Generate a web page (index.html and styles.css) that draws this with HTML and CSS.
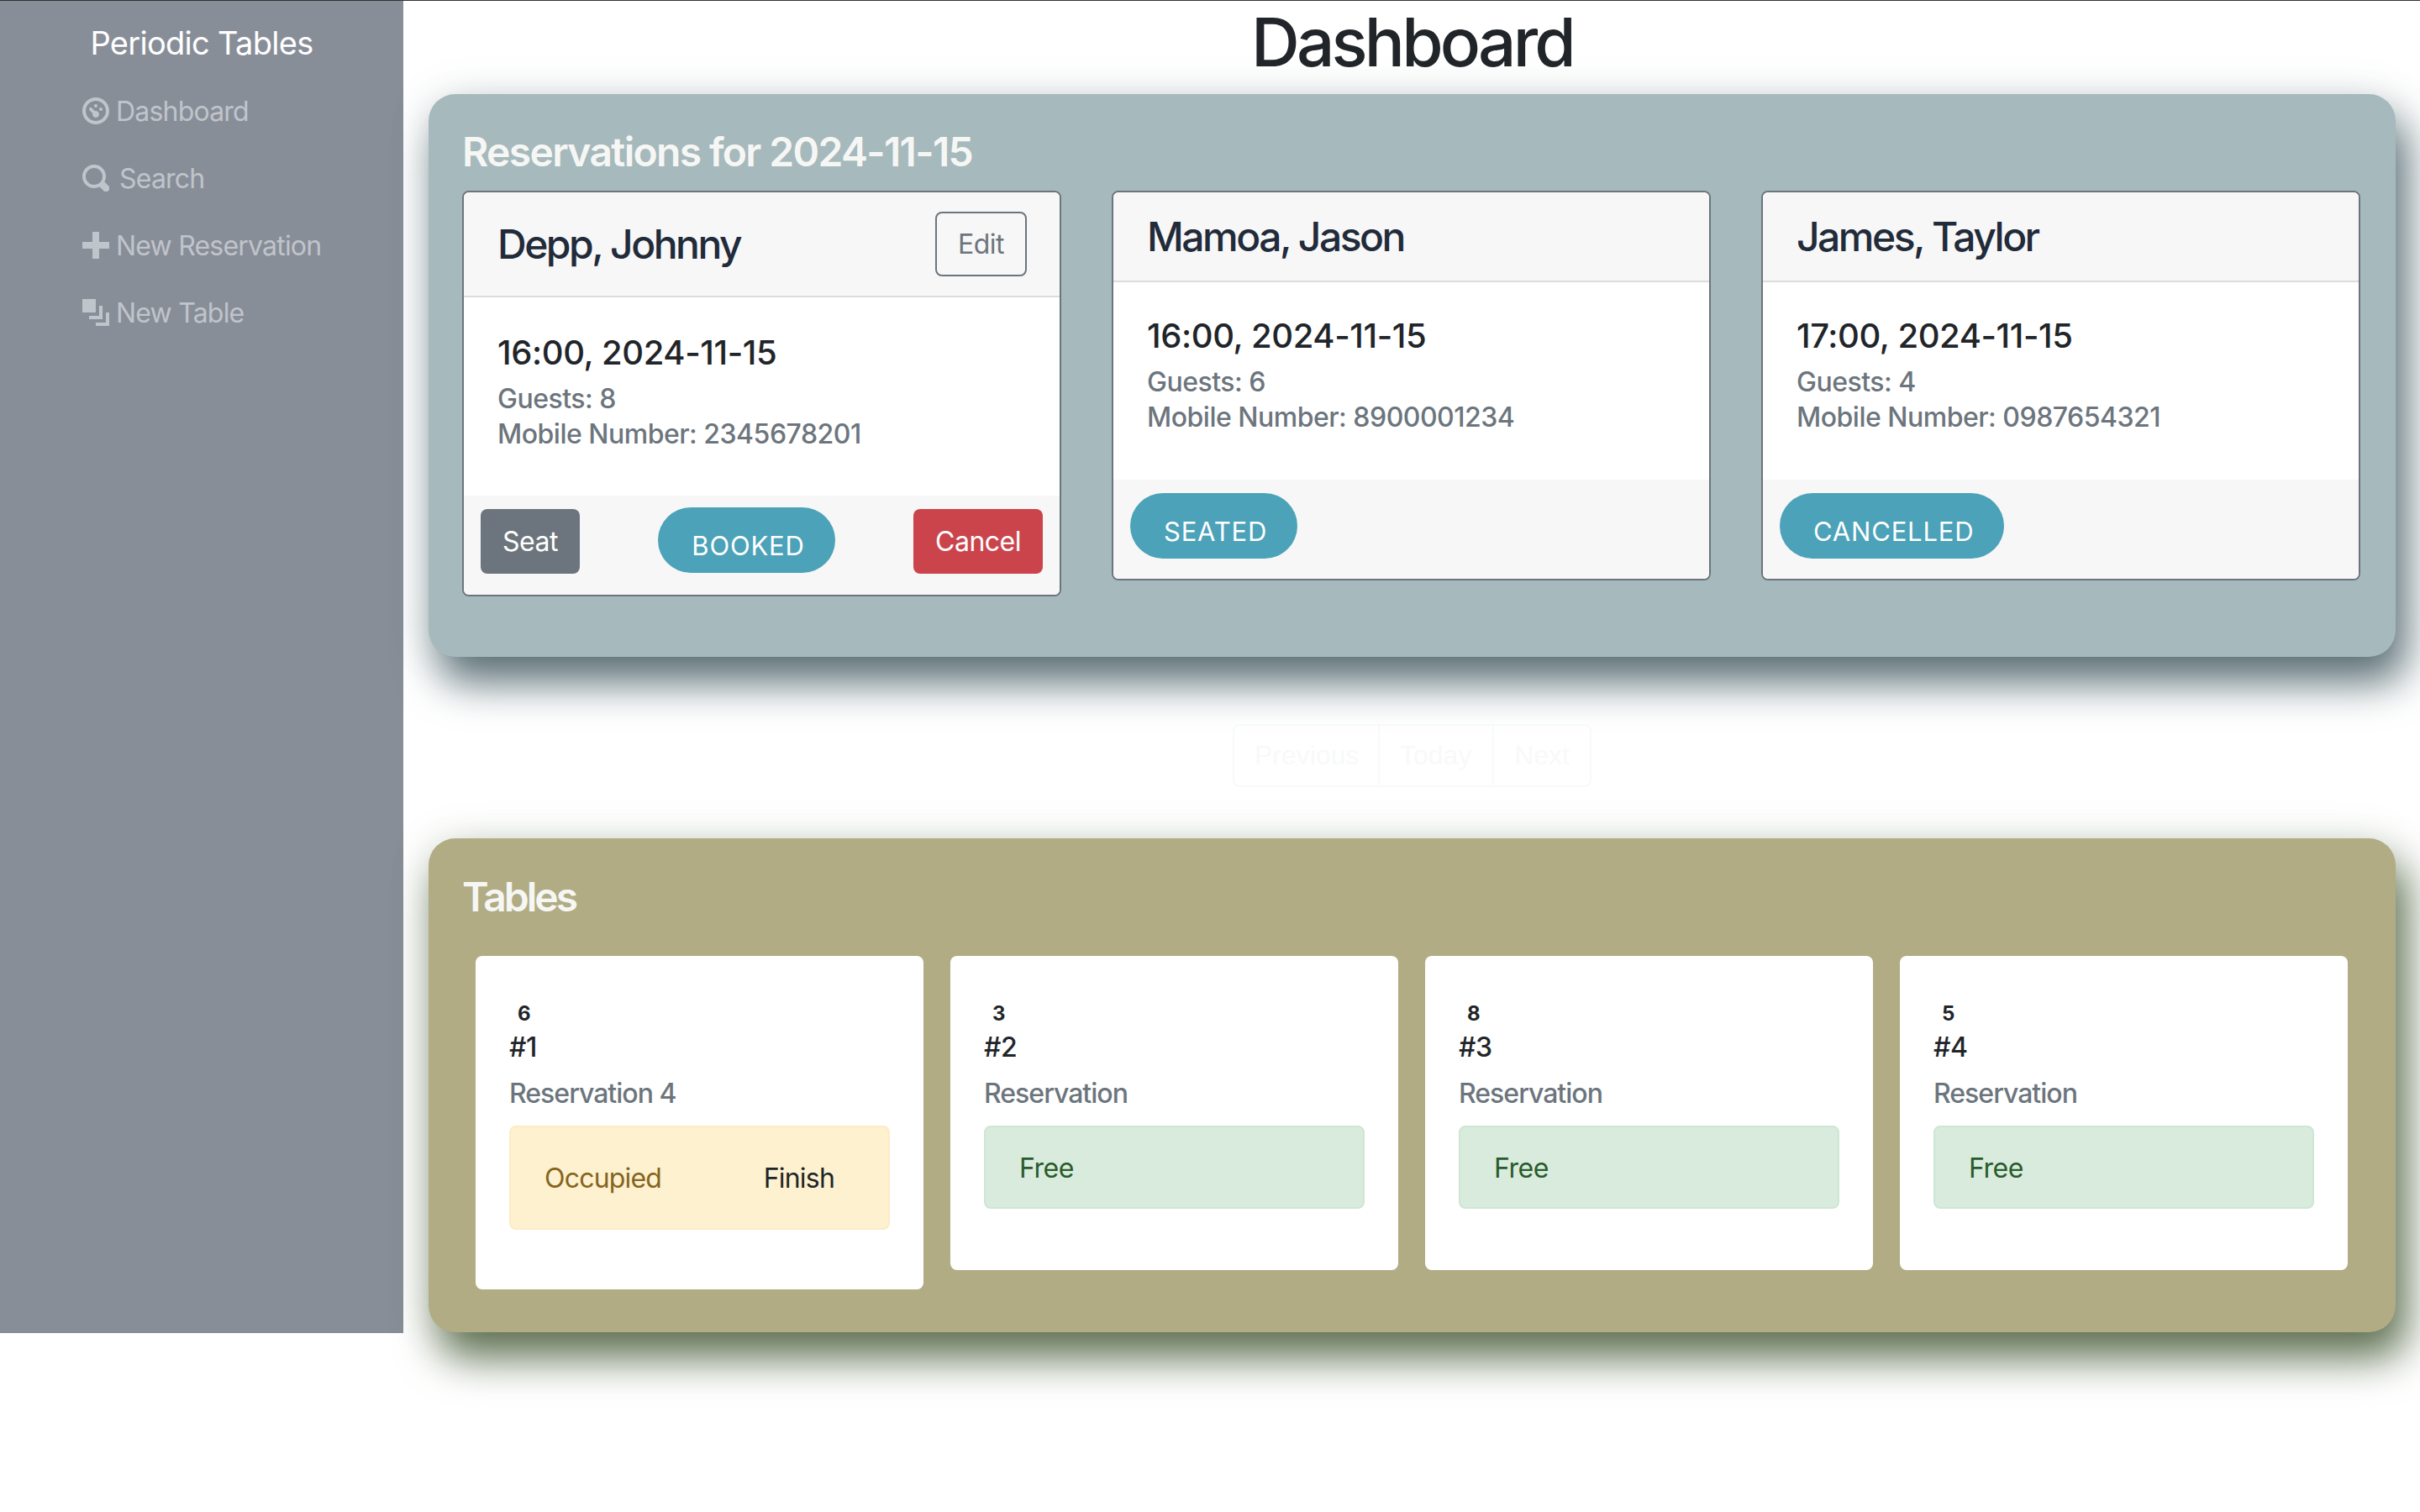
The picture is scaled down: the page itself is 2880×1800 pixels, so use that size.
FILE: index.html
```html
<!DOCTYPE html>
<html lang="en">
<head>
<meta charset="utf-8">
<title>Periodic Tables</title>
<link rel="stylesheet" href="styles.css">
</head>
<body>
<div class="app">
  <aside class="sidebar">
    <div class="brand">Periodic Tables</div>
    <nav class="nav">
      <a class="nav-item"><svg class="icon" viewBox="0 0 8 8"><path d="M4 0c-2.2 0-4 1.8-4 4s1.8 4 4 4 4-1.8 4-4-1.8-4-4-4zm0 1c1.66 0 3 1.34 3 3s-1.34 3-3 3-3-1.34-3-3 1.34-3 3-3zm0 1c-.28 0-.5.22-.5.5s.22.5.5.5.5-.22.5-.5-.22-.5-.5-.5zm-1.66 1a.5.5 0 0 0-.19.84l.91.91c-.02.08-.06.16-.06.25 0 .55.45 1 1 1s1-.45 1-1-.45-1-1-1c-.09 0-.17.04-.25.06l-.91-.91a.5.5 0 0 0-.44-.16.5.5 0 0 0-.06 0zm3.16 0c-.28 0-.5.22-.5.5s.22.5.5.5.5-.22.5-.5-.22-.5-.5-.5z"/></svg><span class="nav-label">Dashboard</span></a>
      <a class="nav-item nav-item-wide"><svg class="icon" viewBox="0 0 8 8"><path d="M3.5 0c-1.93 0-3.5 1.57-3.5 3.5s1.57 3.5 3.5 3.5c.59 0 1.17-.14 1.66-.41a1 1 0 0 0 .13.13l1 1a1.02 1.02 0 1 0 1.44-1.44l-1-1a1 1 0 0 0-.16-.13c.27-.49.44-1.06.44-1.66 0-1.93-1.57-3.5-3.5-3.5zm0 1c1.39 0 2.5 1.11 2.5 2.5 0 .66-.24 1.27-.66 1.72-.01.01-.02.02-.03.03a1 1 0 0 0-.13.13c-.44.4-1.04.63-1.69.63-1.39 0-2.5-1.11-2.5-2.5s1.11-2.5 2.5-2.5z"/></svg><span class="nav-label">Search</span></a>
      <a class="nav-item"><svg class="icon" viewBox="0 0 8 8"><path d="M3 0v3h-3v2h3v3h2v-3h3v-2h-3v-3h-2z"/></svg><span class="nav-label">New Reservation</span></a>
      <a class="nav-item"><svg class="icon" viewBox="0 0 8 8"><path d="M0 0v4h4v-4h-4zm5 2v3h-3v1h4v-4h-1zm2 2v3h-3v1h4v-4h-1z"/></svg><span class="nav-label">New Table</span></a>
    </nav>
  </aside>
  <main class="main">
    <h1 class="page-title">Dashboard</h1>

    <section class="panel panel-res">
      <h2 class="panel-title">Reservations for 2024-11-15</h2>
      <div class="res-grid">
        <article class="res-card">
          <header class="res-head res-head-edit">
            <h3 class="res-name">Depp, Johnny</h3>
            <a class="btn btn-edit">Edit</a>
          </header>
          <div class="res-body res-body-tall">
            <h4 class="res-time">16:00, 2024-11-15</h4>
            <p class="res-line">Guests: 8</p>
            <p class="res-line">Mobile Number: 2345678201</p>
          </div>
          <footer class="res-foot res-foot-actions">
            <a class="btn btn-seat">Seat</a>
            <span class="pill">BOOKED</span>
            <a class="btn btn-cancel">Cancel</a>
          </footer>
        </article>
        <article class="res-card">
          <header class="res-head">
            <h3 class="res-name">Mamoa, Jason</h3>
          </header>
          <div class="res-body">
            <h4 class="res-time">16:00, 2024-11-15</h4>
            <p class="res-line">Guests: 6</p>
            <p class="res-line">Mobile Number: 8900001234</p>
          </div>
          <footer class="res-foot">
            <span class="pill">SEATED</span>
          </footer>
        </article>
        <article class="res-card">
          <header class="res-head">
            <h3 class="res-name">James, Taylor</h3>
          </header>
          <div class="res-body">
            <h4 class="res-time">17:00, 2024-11-15</h4>
            <p class="res-line">Guests: 4</p>
            <p class="res-line">Mobile Number: 0987654321</p>
          </div>
          <footer class="res-foot">
            <span class="pill">CANCELLED</span>
          </footer>
        </article>
      </div>
    </section>

    <div class="pager">
      <a class="pager-btn">Previous</a>
      <a class="pager-btn">Today</a>
      <a class="pager-btn">Next</a>
    </div>

    <section class="panel panel-tables">
      <h2 class="panel-title panel-title-tables">Tables</h2>
      <div class="table-grid">
        <article class="table-card">
          <span class="badge">6</span>
          <h4 class="table-num">#1</h4>
          <p class="table-res">Reservation 4</p>
          <div class="alert alert-busy"><span>Occupied</span><a class="finish">Finish</a></div>
        </article>
        <article class="table-card">
          <span class="badge">3</span>
          <h4 class="table-num">#2</h4>
          <p class="table-res">Reservation</p>
          <div class="alert alert-free">Free</div>
        </article>
        <article class="table-card">
          <span class="badge">8</span>
          <h4 class="table-num">#3</h4>
          <p class="table-res">Reservation</p>
          <div class="alert alert-free">Free</div>
        </article>
        <article class="table-card">
          <span class="badge">5</span>
          <h4 class="table-num">#4</h4>
          <p class="table-res">Reservation</p>
          <div class="alert alert-free">Free</div>
        </article>
      </div>
    </section>
  </main>
</div>
</body>
</html>
```

FILE: styles.css
```css
* { box-sizing: border-box; }
html, body { margin: 0; padding: 0; background: #fff; }
body {
  font-family: Inter, "Liberation Sans", sans-serif;
  font-size: 32px;
  line-height: 48px;
  color: #212529;
  letter-spacing: -0.5px;
  border-top: 1px solid #333;
  height: 1799px;
  overflow: hidden;
}
h1, h2, h3, h4, p { margin: 0; font-weight: 500; }
.app { display: flex; align-items: flex-start; }

.sidebar { width: 480px; flex: none; height: 1586px; background: #888e98; padding-top: 27px; }
.brand { color: #fff; font-size: 38px; line-height: 46px; text-align: center; letter-spacing: -0.7px; font-weight: 400; margin-bottom: 18px; }
.nav { display: flex; flex-direction: column; padding-left: 98px; }
.nav-item { display: flex; align-items: center; gap: 8px; height: 80px; color: #c0c4cb; font-size: 32px; letter-spacing: -0.8px; }
.nav-item-wide { gap: 12px; }
.nav-label { padding-top: 2px; }
.icon { width: 32px; height: 32px; fill: #c0c4cb; flex: none; }

.main { flex: 1; min-width: 0; padding: 0 29px 0 30px; }
.page-title { height: 111px; font-size: 80px; line-height: 98px; text-align: center; letter-spacing: -3.8px; }

.panel { border-radius: 32px; padding: 0 40px; }
.panel-res { height: 670px; background: #a6b9bc; box-shadow: 12px 30px 50px #5a6e75, 0 0 50px rgba(90, 110, 117, .14); }
.panel-title { color: #f6f7f4; font-size: 48px; line-height: 58px; font-weight: 600; padding-top: 40px; height: 115px; letter-spacing: -1.66px; }
.res-grid { display: grid; grid-template-columns: repeat(3, 713px); column-gap: 60px; align-items: start; }
.res-card { display: flex; flex-direction: column; background: #fff; border: 2px solid #6c757d; border-radius: 8px; overflow: hidden; }
.res-head { display: flex; align-items: center; justify-content: space-between; height: 107px; padding: 0 40px; background: #f7f7f7; border-bottom: 2px solid #dcdcdc; }
.res-head-edit { height: 125px; }
.res-name { font-size: 48px; line-height: 58px; letter-spacing: -2.5px; color: #212b3a; }
.res-body { height: 235px; padding: 40px 40px 0; }
.res-body-tall { height: 236px; padding-top: 42px; }
.res-time { font-size: 40px; line-height: 48px; margin-bottom: 10px; letter-spacing: -0.4px; }
.res-line { color: #6c757d; font-size: 32px; line-height: 42px; }
.res-foot { display: flex; align-items: flex-start; height: 118px; padding: 16px 20px 0; background: #f7f7f7; }
.res-foot-actions { justify-content: space-between; padding-top: 14px; }

.btn { display: block; height: 77px; line-height: 73px; padding: 0 24px; border-radius: 8px; border: 2px solid transparent; }
.btn-edit { color: #6c757d; border-color: #6c757d; margin-right: -1px; padding: 0 25px; }
.btn-seat { background: #6c757d; color: #fff; margin-top: 2px; }
.btn-cancel { background: #cb444c; color: #fff; margin-top: 2px; }
.pill { display: block; height: 78px; padding: 22px 36px 0 40px; line-height: 48px; border-radius: 39px; background: #4ca2b8; color: #fff; letter-spacing: 0.8px; font-size: 31px; }

.pager { display: flex; width: 427px; height: 75px; margin: 80px auto 61px; border: 2px solid #f8f9fa; border-radius: 8px; color: #f8f9fa; }
.pager-btn { display: block; padding: 0 24px; line-height: 70px; border-right: 2px solid #f8f9fa; font-family: "Liberation Sans", sans-serif; letter-spacing: 0; }
.pager-btn:first-child { width: 173px; }
.pager-btn:nth-child(2) { width: 137px; }
.pager-btn:last-child { border-right: 0; }

.panel-tables { height: 588px; background: #b1ac84; box-shadow: 12px 30px 50px #5d6f50, 0 0 50px rgba(93, 111, 80, .14); }
.panel-title-tables { padding-top: 41px; height: 140px; letter-spacing: -3px; }
.table-grid { display: grid; grid-template-columns: repeat(4, 533px); column-gap: 32px; align-items: start; margin-left: 16px; }
.table-card { background: #fff; border-radius: 8px; padding: 50px 40px 73px; }
.badge { display: block; font-size: 24px; line-height: 38px; font-weight: 700; padding-left: 10px; letter-spacing: 0; }
.table-num { font-size: 32px; line-height: 42px; margin-bottom: 10px; }
.table-res { color: #6c757d; line-height: 48px; margin-bottom: 14px; letter-spacing: -1px; }
.alert { display: flex; align-items: center; border-radius: 8px; padding: 2px 40px 0; border: 2px solid; height: 99px; }
.alert-free { background: #d9ebdc; border-color: #cfe6d4; color: #285b2c; }
.alert-busy { justify-content: space-between; height: 124px; margin-bottom: -2px; background: #fdf1cf; border-color: #fcecc5; color: #856420; padding-right: 64px; letter-spacing: -0.8px; }
.finish { color: #212529; }
```
